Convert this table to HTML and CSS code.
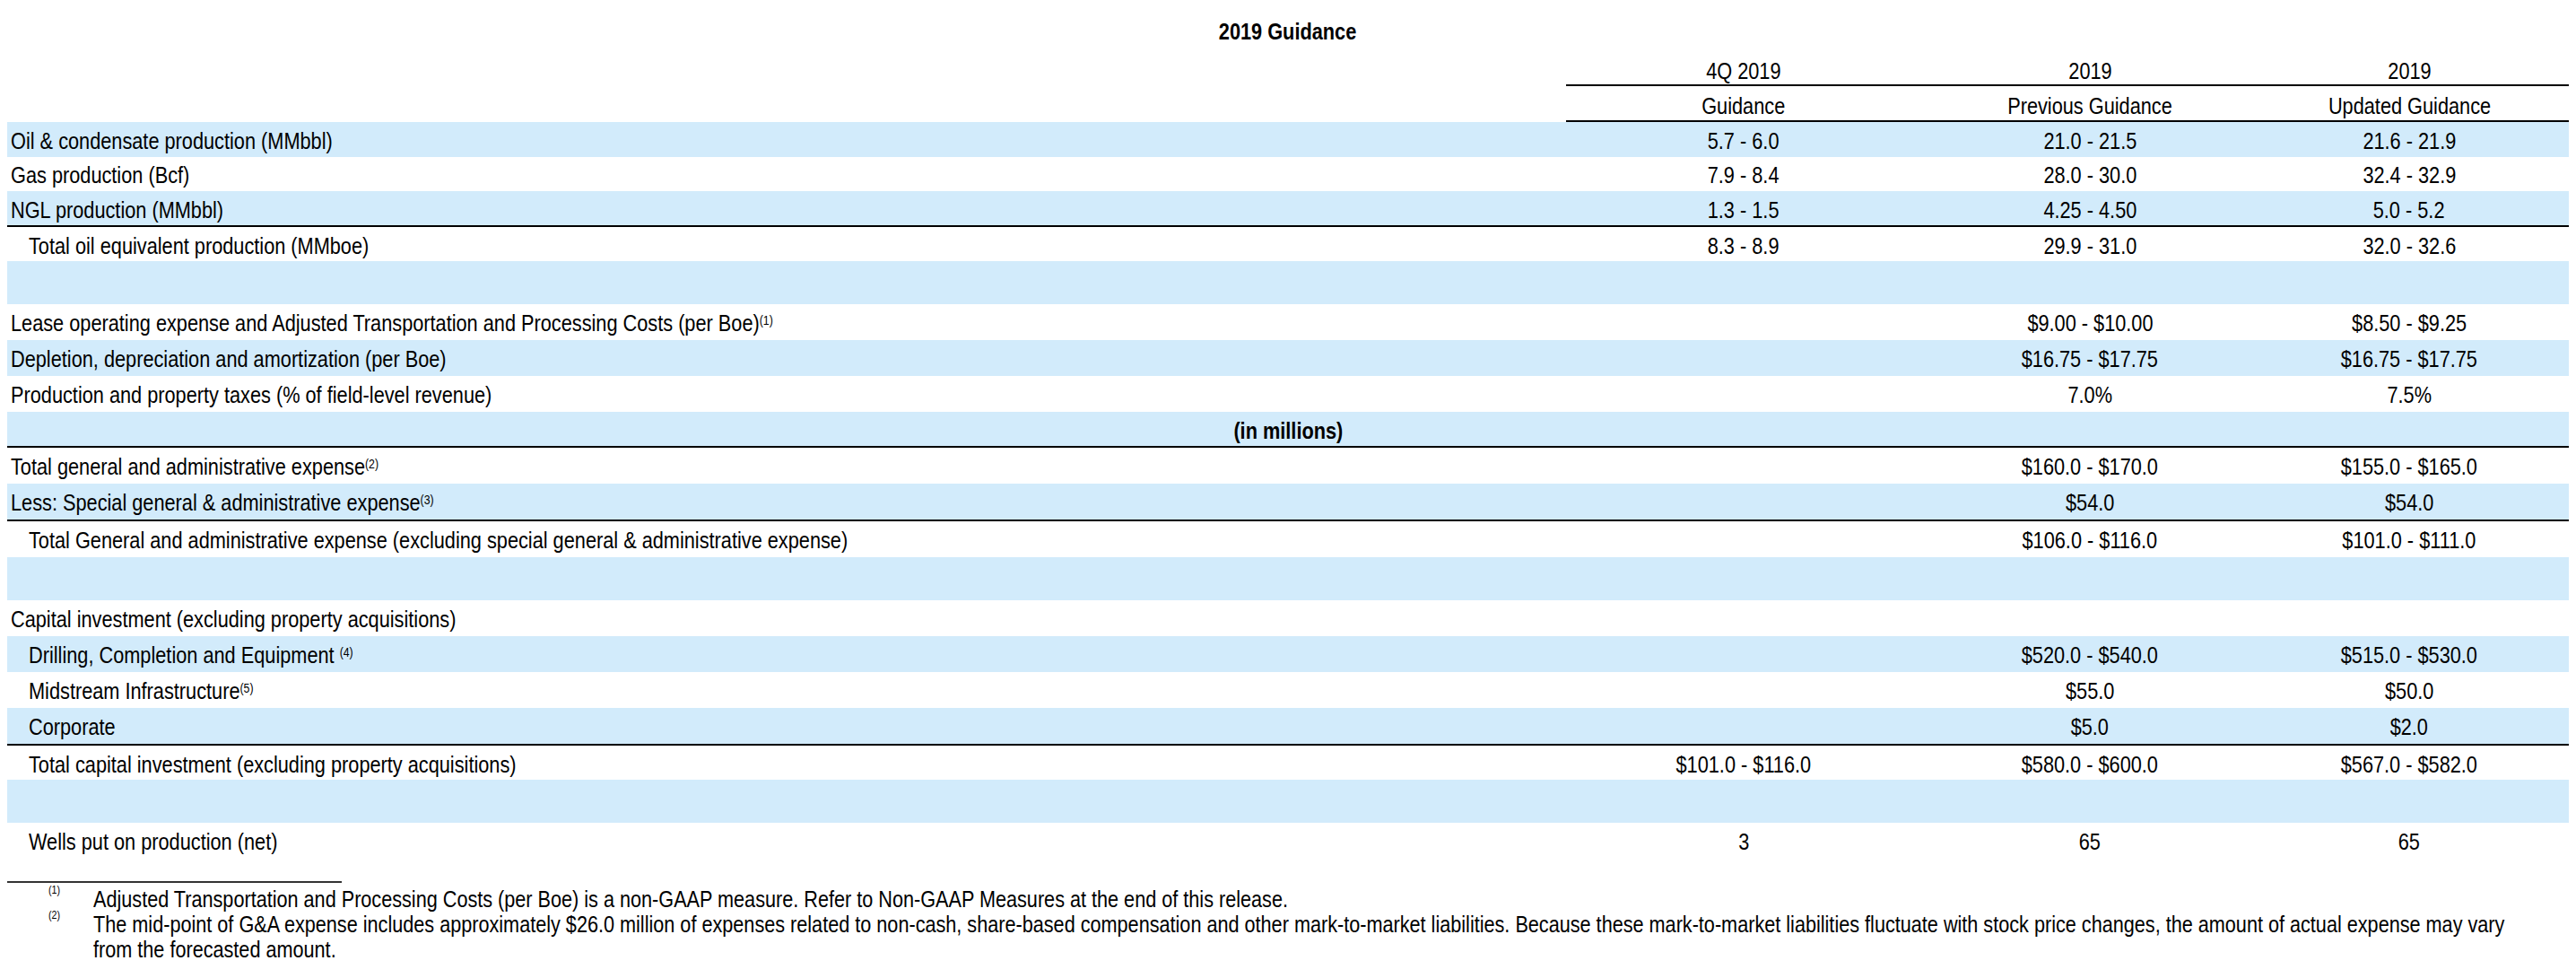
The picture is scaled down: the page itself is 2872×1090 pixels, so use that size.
FILE: index.html
```html
<!DOCTYPE html>
<html lang="en">
<head>
<meta charset="utf-8">
<title>2019 Guidance</title>
<link rel="stylesheet" href="styles.css">
</head>
<body>
<div class="page">
  <div class="title"><span class="t">2019 Guidance</span></div>
  <div class="table">
    <div class="row head h1">
      <div class="cell"></div>
      <div class="cell num line"><span class="t">4Q 2019</span></div>
      <div class="cell num line"><span class="t">2019</span></div>
      <div class="cell num line"><span class="t">2019</span></div>
      <div class="cell line"></div>
    </div>
    <div class="row head h2">
      <div class="cell"></div>
      <div class="cell num line"><span class="t">Guidance</span></div>
      <div class="cell num line"><span class="t">Previous Guidance</span></div>
      <div class="cell num line"><span class="t">Updated Guidance</span></div>
      <div class="cell line"></div>
    </div>
    <div class="body">
      <div class="row short">
        <div class="cell label"><span class="t">Oil &amp; condensate production (MMbbl)</span></div>
        <div class="cell num"><span class="t">5.7 - 6.0</span></div><div class="cell num"><span class="t">21.0 - 21.5</span></div><div class="cell num"><span class="t">21.6 - 21.9</span></div><div class="cell"></div>
      </div>
      <div class="row short">
        <div class="cell label"><span class="t">Gas production (Bcf)</span></div>
        <div class="cell num"><span class="t">7.9 - 8.4</span></div><div class="cell num"><span class="t">28.0 - 30.0</span></div><div class="cell num"><span class="t">32.4 - 32.9</span></div><div class="cell"></div>
      </div>
      <div class="row rule">
        <div class="cell label"><span class="t">NGL production (MMbbl)</span></div>
        <div class="cell num"><span class="t">1.3 - 1.5</span></div><div class="cell num"><span class="t">4.25 - 4.50</span></div><div class="cell num"><span class="t">5.0 - 5.2</span></div><div class="cell"></div>
      </div>
      <div class="row r38">
        <div class="cell label indent"><span class="t">Total oil equivalent production (MMboe)</span></div>
        <div class="cell num"><span class="t">8.3 - 8.9</span></div><div class="cell num"><span class="t">29.9 - 31.0</span></div><div class="cell num"><span class="t">32.0 - 32.6</span></div><div class="cell"></div>
      </div>
      <div class="row blank"></div>
      <div class="row">
        <div class="cell label"><span class="t">Lease operating expense and Adjusted Transportation and Processing Costs (per Boe)<sup>(1)</sup></span></div>
        <div class="cell num"></div><div class="cell num"><span class="t">$9.00 - $10.00</span></div><div class="cell num"><span class="t">$8.50 - $9.25</span></div><div class="cell"></div>
      </div>
      <div class="row">
        <div class="cell label"><span class="t">Depletion, depreciation and amortization (per Boe)</span></div>
        <div class="cell num"></div><div class="cell num"><span class="t">$16.75 - $17.75</span></div><div class="cell num"><span class="t">$16.75 - $17.75</span></div><div class="cell"></div>
      </div>
      <div class="row">
        <div class="cell label"><span class="t">Production and property taxes (% of field-level revenue)</span></div>
        <div class="cell num"></div><div class="cell num"><span class="t">7.0%</span></div><div class="cell num"><span class="t">7.5%</span></div><div class="cell"></div>
      </div>
      <div class="row rule">
        <div class="cell full"><span class="t">(in millions)</span></div>
      </div>
      <div class="row">
        <div class="cell label"><span class="t">Total general and administrative expense<sup>(2)</sup></span></div>
        <div class="cell num"></div><div class="cell num"><span class="t">$160.0 - $170.0</span></div><div class="cell num"><span class="t">$155.0 - $165.0</span></div><div class="cell"></div>
      </div>
      <div class="row rule r42">
        <div class="cell label"><span class="t">Less: Special general &amp; administrative expense<sup>(3)</sup></span></div>
        <div class="cell num"></div><div class="cell num"><span class="t">$54.0</span></div><div class="cell num"><span class="t">$54.0</span></div><div class="cell"></div>
      </div>
      <div class="row">
        <div class="cell label indent"><span class="t">Total General and administrative expense (excluding special general &amp; administrative expense)</span></div>
        <div class="cell num"></div><div class="cell num"><span class="t">$106.0 - $116.0</span></div><div class="cell num"><span class="t">$101.0 - $111.0</span></div><div class="cell"></div>
      </div>
      <div class="row blank"></div>
      <div class="row">
        <div class="cell label"><span class="t">Capital investment (excluding property acquisitions)</span></div>
        <div class="cell num"></div><div class="cell num"></div><div class="cell num"></div><div class="cell"></div>
      </div>
      <div class="row">
        <div class="cell label indent"><span class="t">Drilling, Completion and Equipment <sup>(4)</sup></span></div>
        <div class="cell num"></div><div class="cell num"><span class="t">$520.0 - $540.0</span></div><div class="cell num"><span class="t">$515.0 - $530.0</span></div><div class="cell"></div>
      </div>
      <div class="row">
        <div class="cell label indent"><span class="t">Midstream Infrastructure<sup>(5)</sup></span></div>
        <div class="cell num"></div><div class="cell num"><span class="t">$55.0</span></div><div class="cell num"><span class="t">$50.0</span></div><div class="cell"></div>
      </div>
      <div class="row rule r42">
        <div class="cell label indent"><span class="t">Corporate</span></div>
        <div class="cell num"></div><div class="cell num"><span class="t">$5.0</span></div><div class="cell num"><span class="t">$2.0</span></div><div class="cell"></div>
      </div>
      <div class="row r38">
        <div class="cell label indent"><span class="t">Total capital investment (excluding property acquisitions)</span></div>
        <div class="cell num"><span class="t">$101.0 - $116.0</span></div><div class="cell num"><span class="t">$580.0 - $600.0</span></div><div class="cell num"><span class="t">$567.0 - $582.0</span></div><div class="cell"></div>
      </div>
      <div class="row blank"></div>
      <div class="row">
        <div class="cell label indent"><span class="t">Wells put on production (net)</span></div>
        <div class="cell num"><span class="t">3</span></div><div class="cell num"><span class="t">65</span></div><div class="cell num"><span class="t">65</span></div><div class="cell"></div>
      </div>
    </div>
  </div>
  <div class="notes">
    <div class="note-rule"></div>
    <div class="note">
      <span class="mark"><span class="t">(1)</span></span>
      <p class="note-text">Adjusted Transportation and Processing Costs (per Boe) is a non-GAAP measure. Refer to Non-GAAP Measures at the end of this release.</p>
    </div>
    <div class="note">
      <span class="mark"><span class="t">(2)</span></span>
      <p class="note-text">The mid-point of G&amp;A expense includes approximately $26.0 million of expenses related to non-cash, share-based compensation and other mark-to-market liabilities. Because these mark-to-market liabilities fluctuate with stock price changes, the amount of actual expense may vary from the forecasted amount.</p>
    </div>
  </div>
</div>
</body>
</html>
```

FILE: styles.css
```css
html, body {
  margin: 0;
  padding: 0;
  background: #ffffff;
  overflow: hidden;
}

/* Condensed face (Arial Narrow look) emulated with a horizontal squeeze */
.page {
  padding: 0 8px;
  font-family: "Liberation Sans", Arial, sans-serif;
  font-size: 26.5px;
  color: #000000;
}

.t {
  display: inline-block;
  transform: scaleX(0.82);
  transform-origin: center top;
}

.label .t,
.mark .t {
  transform-origin: left top;
}

.title {
  height: 55px;
  box-sizing: border-box;
  padding-top: 19.8px;
  line-height: 30px;
  font-weight: bold;
  text-align: center;
}

.row {
  display: grid;
  grid-template-columns: 1738px 396px 376px 336px 10px;
  height: 40px;
  box-sizing: border-box;
}

.cell {
  padding-top: 5.8px;
  line-height: 30px;
  white-space: nowrap;
  box-sizing: border-box;
}

.head.h1 {
  height: 41px;
}

.head.h1 .cell {
  padding-top: 8.5px;
}

.head.h2 .cell {
  padding-top: 6.8px;
}

.head .line {
  border-bottom: 2px solid #000000;
}

.num {
  text-align: center;
}

.label {
  padding-left: 4px;
}

.label.indent {
  padding-left: 24px;
}

.full {
  grid-column: 1 / -1;
  text-align: center;
  font-weight: bold;
}

.body .row:nth-child(odd) {
  background: #d2ebfb;
}

.row.short {
  height: 38.5px;
}

.row.r38 {
  height: 38px;
}

.row.r42 {
  height: 42px;
}

.row.blank {
  height: 48px;
}

.row.rule {
  border-bottom: 2px solid #000000;
}

sup {
  font-size: 15px;
  vertical-align: 7px;
  line-height: 0;
}

.notes {
  padding-top: 25px;
}

.note-rule {
  width: 373px;
  height: 0;
  border-top: 2px solid #333333;
  margin-bottom: 4px;
}

.note {
  display: grid;
  grid-template-columns: 96px minmax(0, 1fr);
  font-size: 26.4px;
  line-height: 28px;
}

.mark {
  padding-left: 46px;
  font-size: 13px;
  line-height: 28px;
  position: relative;
  top: -10px;
}

.note-text {
  margin: 0;
  width: 3312px;
  transform: scaleX(0.82);
  transform-origin: left top;
}
```
